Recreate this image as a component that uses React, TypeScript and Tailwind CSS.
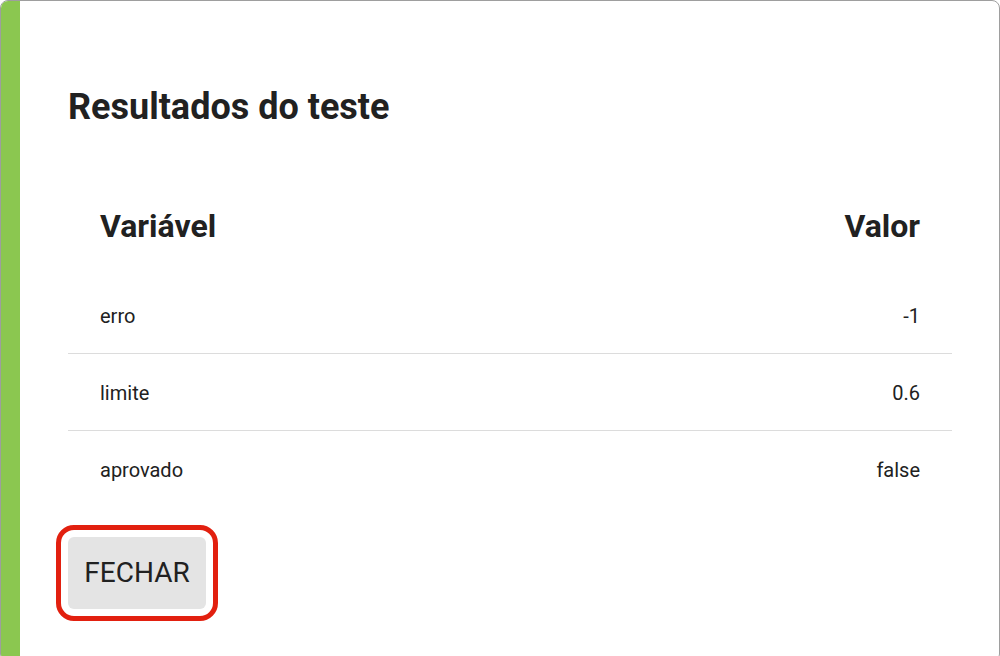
const rows = [
  { name: "erro", value: "-1" },
  { name: "limite", value: "0.6" },
  { name: "aprovado", value: "false" },
];

export default function App() {
  return (
    <div className="h-[656px] w-[1000px] overflow-hidden bg-white font-['Roboto',sans-serif] text-[#212121]">
      <div className="flex h-[662px] overflow-hidden rounded-lg border border-[#9e9e9e]">
        {/* Accent strip */}
        <div className="w-[19px] shrink-0 bg-[#8bc750]" />

        <div className="flex-1 pl-12 pr-[47px] pt-[85px]">
          <h2 className="text-[36px] font-bold leading-[42px]">Resultados do teste</h2>

          <table className="mt-[47px] w-full border-collapse">
            <thead>
              <tr className="h-[101px]">
                <th className="px-8 text-left text-[32px] font-bold">Variável</th>
                <th className="px-8 text-right text-[32px] font-bold">Valor</th>
              </tr>
            </thead>
            <tbody>
              {rows.map((row, i) => (
                <tr
                  key={row.name}
                  className={i < rows.length - 1 ? "h-[77px] border-b border-[#dcdcdc]" : "h-[77px]"}
                >
                  <td className="px-8 pt-[3px] text-left text-[20px]">{row.name}</td>
                  <td className="px-8 pt-[3px] text-right text-[20px]">{row.value}</td>
                </tr>
              ))}
            </tbody>
          </table>

          <button className="mt-[30px] h-[72px] w-[138px] rounded-md bg-[#e4e4e4] text-[28px] text-[#212121] outline-solid outline-[5px] outline-offset-[7px] outline-[#e2200f]">
            FECHAR
          </button>
        </div>
      </div>
    </div>
  );
}
